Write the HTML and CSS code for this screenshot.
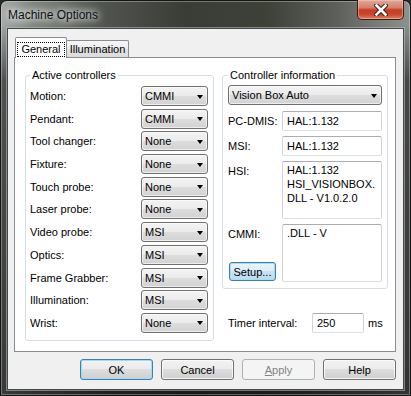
FILE: index.html
```html
<!DOCTYPE html>
<html>
<head>
<meta charset="utf-8">
<title>Machine Options</title>
<link rel="stylesheet" href="styles.css">
</head>
<body>
<div class="window">
  <div class="titlebar">
    <span class="title">Machine Options</span>
    <div class="close">
      <svg width="14" height="12" viewBox="0 0 14 12">
        <path d="M2.5 1.5 L11.5 10.5 M11.5 1.5 L2.5 10.5" stroke="#3b2019" stroke-width="4.6" stroke-linecap="square"/>
        <path d="M2.5 1.5 L11.5 10.5 M11.5 1.5 L2.5 10.5" stroke="#ffffff" stroke-width="2.6" stroke-linecap="square"/>
      </svg>
    </div>
  </div>
  <div class="client">
    <div class="tabs">
      <div class="tab active"><span class="focus">General</span></div>
      <div class="tab">Illumination</div>
    </div>
    <div class="panel">
      <fieldset class="group group-left">
        <legend>Active controllers</legend>
        <div class="rows">
          <span class="lbl">Motion:</span><div class="combo">CMMI</div>
          <span class="lbl">Pendant:</span><div class="combo">CMMI</div>
          <span class="lbl">Tool changer:</span><div class="combo">None</div>
          <span class="lbl">Fixture:</span><div class="combo">None</div>
          <span class="lbl">Touch probe:</span><div class="combo">None</div>
          <span class="lbl">Laser probe:</span><div class="combo">None</div>
          <span class="lbl">Video probe:</span><div class="combo">MSI</div>
          <span class="lbl">Optics:</span><div class="combo">MSI</div>
          <span class="lbl">Frame Grabber:</span><div class="combo">MSI</div>
          <span class="lbl">Illumination:</span><div class="combo">MSI</div>
          <span class="lbl">Wrist:</span><div class="combo">None</div>
        </div>
      </fieldset>
      <div class="right-col">
        <fieldset class="group group-right">
          <legend>Controller information</legend>
          <div class="combo wide">Vision Box Auto</div>
          <div class="info">
            <span class="lbl">PC-DMIS:</span><div class="field">HAL:1.132</div>
            <span class="lbl">MSI:</span><div class="field">HAL:1.132</div>
            <span class="lbl">HSI:</span><div class="field tall">HAL:1.132<br>HSI_VISIONBOX.<br>DLL - V1.0.2.0</div>
            <div class="lbl cmmi-cell"><span>CMMI:</span><button class="btn setup">Setup...</button></div><div class="field tall">.DLL - V</div>
          </div>
        </fieldset>
        <div class="timer">
          <span class="timer-lbl">Timer interval:</span>
          <div class="field small">250</div>
          <span class="ms">ms</span>
        </div>
      </div>
    </div>
    <div class="buttons">
      <button class="btn default">OK</button>
      <button class="btn">Cancel</button>
      <button class="btn disabled"><u>A</u>pply</button>
      <button class="btn">Help</button>
    </div>
  </div>
</div>
</body>
</html>
```

FILE: styles.css
```css
* { box-sizing: border-box; }
html, body { margin: 0; padding: 0; }
body {
  width: 411px;
  height: 396px;
  overflow: hidden;
  background: #2a2c28;
  font-family: "Liberation Sans", Arial, sans-serif;
  font-size: 11px;
  color: #000;
}

.window {
  width: 411px;
  height: 396px;
  border: 1px solid #141414;
  border-radius: 7px 7px 0 0;
  padding: 0 6px 5px 6px;
  display: flex;
  flex-direction: column;
  background:
    linear-gradient(to bottom, rgba(0,0,0,0) 0, rgba(0,0,0,0) 24px, rgba(12,12,10,.55) 80px, rgba(12,12,10,.7) 100%),
    linear-gradient(90deg, #a3a9a7 0%, #80867f 8%, #525650 24%, #3a3d36 45%, #3e4138 65%, #5d605a 82%, #8e928f 100%);
  box-shadow: inset 0 0 0 1px rgba(255,255,255,.3);
}

.titlebar {
  height: 27px;
  display: flex;
  align-items: center;
  justify-content: space-between;
  padding-left: 1px;
}
.title {
  font-size: 12px;
  color: #0b0f14;
  text-shadow: 0 0 6px rgba(255,255,255,.95), 0 0 10px rgba(255,255,255,.8), 0 0 14px rgba(255,255,255,.6);
}
.close {
  align-self: flex-start;
  margin-top: -1px;
  width: 47px;
  height: 20px;
  border: 1px solid #3e1a12;
  border-top: 0;
  border-radius: 0 0 5px 5px;
  background: linear-gradient(#dfa89c 0%, #d5806d 40%, #c63f25 52%, #c7452b 75%, #e0805f 100%);
  box-shadow: inset 0 0 0 1px rgba(255,210,200,.45);
  display: flex;
  align-items: center;
  justify-content: center;
}
.close svg { display: block; margin-top: 1px; }

.client {
  flex: 1;
  background: #f0f0f0;
  border: 1px solid #45484b;
  box-shadow: 0 0 0 1px rgba(190,196,200,.55);
  padding: 8px 7px 9px 6px;
  display: flex;
  flex-direction: column;
}

.tabs {
  display: flex;
  align-items: flex-end;
  padding-left: 1px;
}
.tab {
  height: 17px;
  width: 63px;
  border: 1px solid #898c95;
  border-bottom: 0;
  border-radius: 2px 2px 0 0;
  background: linear-gradient(#f6f6f6, #ececec 50%, #e2e2e2 51%, #dcdcdc);
  display: flex;
  align-items: center;
  justify-content: center;
  margin-left: -1px;
}
.tab.active {
  width: 52px;
  height: 21px;
  margin-left: 0;
  margin-bottom: -1px;
  background: #fff;
  position: relative;
  z-index: 1;
  align-items: flex-start;
  padding-top: 4px;
}
.focus {
  border: 1px dotted #000;
  padding: 0 3px;
  line-height: 13px;
}

.panel {
  height: 295px;
  border: 1px solid #898c95;
  background: #fff;
  display: flex;
  gap: 8px;
  padding: 10px 7px 10px 10px;
}

.group {
  margin: 0;
  border: 1px solid #d5dfe5;
  border-radius: 3px;
  min-width: 0;
}
.group legend {
  padding: 0 2px;
  line-height: 14px;
  font-size: 11px;
}
.group-left {
  width: 189px;
  padding: 4px 5px 6px 4px;
}
.rows {
  display: grid;
  grid-template-columns: 1fr 67px;
  row-gap: 2.7px;
  align-items: center;
}
.lbl { line-height: 14px; }

.combo {
  height: 20px;
  border: 1px solid #707070;
  border-radius: 3px;
  background: linear-gradient(#f3f3f3 0%, #ebebeb 50%, #dddddd 51%, #d2d2d2 100%);
  box-shadow: inset 0 0 0 1px rgba(255,255,255,.6);
  display: flex;
  align-items: center;
  justify-content: space-between;
  padding: 1px 4px 0 3px;
  line-height: 1;
}
.combo::after {
  content: "";
  border-top: 4px solid #000;
  border-left: 3.5px solid transparent;
  border-right: 3.5px solid transparent;
}

.right-col {
  width: 166px;
  display: flex;
  flex-direction: column;
}
.group-right {
  padding: 3px 5px 6px 5px;
}
.info {
  margin-top: 6px;
  display: grid;
  grid-template-columns: 54px 1fr;
  row-gap: 5px;
  align-items: start;
}
.info .lbl { padding-top: 3px; }

.field {
  height: 20px;
  border: 1px solid;
  border-color: #abadb3 #d0d4da #dbe0e6 #d0d4da;
  border-radius: 2px;
  background: #fff;
  padding: 0 4px;
  line-height: 18px;
  white-space: nowrap;
  overflow: hidden;
}
.field.tall {
  height: 58px;
  line-height: 14px;
  padding: 1px 4px;
}
.cmmi-cell {
  height: 58px;
  padding-top: 3px;
  display: flex;
  flex-direction: column;
  justify-content: space-between;
  align-items: flex-start;
}

.timer {
  margin-top: 24px;
  padding-left: 6px;
  display: flex;
  align-items: center;
}
.timer-lbl { width: 84px; }
.field.small { width: 52px; }
.ms { margin-left: 4px; }

.buttons {
  margin-top: 7px;
  display: flex;
  justify-content: flex-end;
  gap: 8px;
}
.btn {
  width: 73px;
  height: 21px;
  padding: 0;
  border: 1px solid #707070;
  border-radius: 3px;
  background: linear-gradient(#f2f2f2 0%, #ebebeb 49%, #dddddd 50%, #cfcfcf 100%);
  box-shadow: inset 0 0 0 1px rgba(252,252,252,.85);
  font-family: "Liberation Sans", Arial, sans-serif;
  font-size: 11px;
  color: #000;
}
.btn.default {
  border-color: #3c7fb1;
  box-shadow: inset 0 0 0 1px #9fdcf5;
}
.btn.disabled {
  border-color: #adb2b5;
  background: #f4f4f4;
  box-shadow: none;
  color: #838383;
}
.btn.setup {
  width: 47px;
  height: 19px;
  margin: 0 0 1px 1px;
  border-color: #3c7fb1;
  background: linear-gradient(#eaf4fa 0%, #dcecf6 49%, #c9e2f2 50%, #bcdaee 100%);
  box-shadow: inset 0 0 0 1px #a8ddf5;
}
```
